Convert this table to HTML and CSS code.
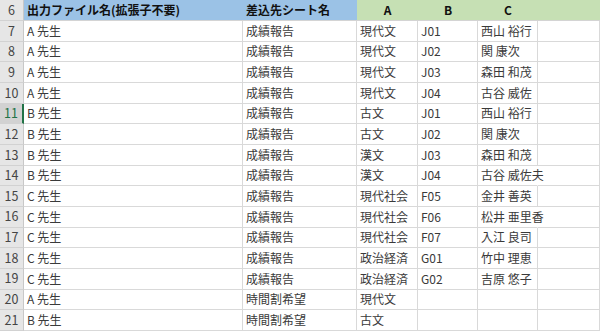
FILE: index.html
```html
<!DOCTYPE html>
<html lang="ja">
<head>
<meta charset="utf-8">
<link rel="stylesheet" href="styles.css">
</head>
<body>
<div class="sheet">
  <div class="rh">6</div><div class="hd blue">出力ファイル名(拡張子不要)</div><div class="hd blue">差込先シート名</div><div class="hd green c">A</div><div class="hd green c">B</div><div class="hd green c">C</div><div class="hd green"></div>

  <div class="rh">7</div><div class="cell">A 先生</div><div class="cell">成績報告</div><div class="cell">現代文</div><div class="cell">J01</div><div class="cell">西山 裕行</div><div class="cell"></div>
  <div class="rh">8</div><div class="cell">A 先生</div><div class="cell">成績報告</div><div class="cell">現代文</div><div class="cell">J02</div><div class="cell">関 康次</div><div class="cell"></div>
  <div class="rh">9</div><div class="cell">A 先生</div><div class="cell">成績報告</div><div class="cell">現代文</div><div class="cell">J03</div><div class="cell">森田 和茂</div><div class="cell"></div>
  <div class="rh">10</div><div class="cell">A 先生</div><div class="cell">成績報告</div><div class="cell">現代文</div><div class="cell">J04</div><div class="cell">古谷 威佐</div><div class="cell"></div>
  <div class="rh sel">11</div><div class="cell">B 先生</div><div class="cell">成績報告</div><div class="cell">古文</div><div class="cell">J01</div><div class="cell">西山 裕行</div><div class="cell"></div>
  <div class="rh">12</div><div class="cell">B 先生</div><div class="cell">成績報告</div><div class="cell">古文</div><div class="cell">J02</div><div class="cell">関 康次</div><div class="cell"></div>
  <div class="rh">13</div><div class="cell">B 先生</div><div class="cell">成績報告</div><div class="cell">漢文</div><div class="cell">J03</div><div class="cell">森田 和茂</div><div class="cell"></div>
  <div class="rh">14</div><div class="cell">B 先生</div><div class="cell">成績報告</div><div class="cell">漢文</div><div class="cell">J04</div><div class="cell ov">古谷 威佐夫</div><div class="cell"></div>
  <div class="rh">15</div><div class="cell">C 先生</div><div class="cell">成績報告</div><div class="cell">現代社会</div><div class="cell">F05</div><div class="cell">金井 善英</div><div class="cell"></div>
  <div class="rh">16</div><div class="cell">C 先生</div><div class="cell">成績報告</div><div class="cell">現代社会</div><div class="cell">F06</div><div class="cell ov">松井 亜里香</div><div class="cell"></div>
  <div class="rh">17</div><div class="cell">C 先生</div><div class="cell">成績報告</div><div class="cell">現代社会</div><div class="cell">F07</div><div class="cell">入江 良司</div><div class="cell"></div>
  <div class="rh">18</div><div class="cell">C 先生</div><div class="cell">成績報告</div><div class="cell">政治経済</div><div class="cell">G01</div><div class="cell">竹中 理恵</div><div class="cell"></div>
  <div class="rh">19</div><div class="cell">C 先生</div><div class="cell">成績報告</div><div class="cell">政治経済</div><div class="cell">G02</div><div class="cell">吉原 悠子</div><div class="cell"></div>
  <div class="rh">20</div><div class="cell">A 先生</div><div class="cell">時間割希望</div><div class="cell">現代文</div><div class="cell"></div><div class="cell"></div><div class="cell"></div>
  <div class="rh">21</div><div class="cell">B 先生</div><div class="cell">時間割希望</div><div class="cell">古文</div><div class="cell"></div><div class="cell"></div><div class="cell"></div>
</div>
</body>
</html>
```
FILE: styles.css
```css
html, body {
  margin: 0;
  padding: 0;
  background: #ffffff;
  overflow: hidden;
}
.sheet {
  display: grid;
  grid-template-columns: 24px 219px 114px 61px 60px 60px 62px;
  grid-template-rows: 21px;
  grid-auto-rows: 20.67px;
  width: 600px;
  font-family: "Noto Sans CJK JP", "Noto Sans", sans-serif;
  font-size: 12px;
  color: #3a3a3a;
}
.sheet > div {
  box-sizing: border-box;
  white-space: nowrap;
  display: flex;
  align-items: center;
  line-height: 1;
}
.rh {
  background: #e6e6e6;
  color: #444444;
  justify-content: center;
  border-bottom: 1px solid #d2d2d2;
  border-right: 1px solid #c8c8c8;
  font-size: 12.5px;
}
.rh.sel {
  background: #d2d2d2;
  color: #217346;
  border-right: 2px solid #217346;
}
.hd {
  font-weight: bold;
  color: #111111;
  padding-left: 3px;
  border-bottom: 1px solid #d4d4d4;
}
.blue { background: #9bc2e6; }
.green { background: #c6e0b4; }
.hd.c {
  justify-content: center;
  padding-left: 0;
}
.cell {
  padding-left: 3px;
  border-right: 1px solid #d9d9d9;
  border-bottom: 1px solid #d9d9d9;
}
.cell.ov {
  border-right-color: transparent;
}
```
